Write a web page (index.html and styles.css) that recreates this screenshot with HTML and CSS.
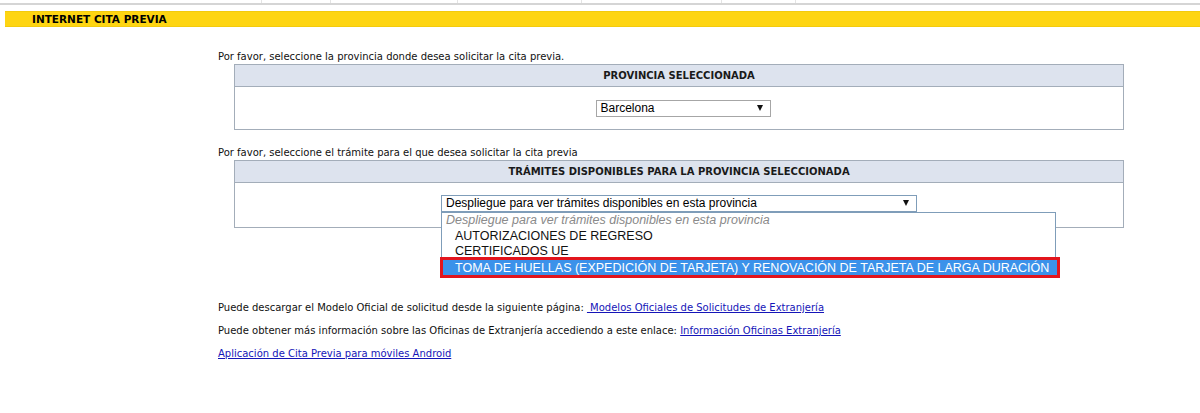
FILE: index.html
```html
<!DOCTYPE html>
<html>
<head>
  <meta charset="utf-8">
  <link rel="stylesheet" href="styles.css">
</head>
<body>
  <div class="top-strip">
    <span style="width: 262px"></span>
    <span style="width: 69px"></span>
    <span style="width: 127px"></span>
    <span style="width: 124px"></span>
    <span style="width: 140px"></span>
    <span style="width: 74px"></span>
  </div>

  <div class="title-bar">INTERNET CITA PREVIA</div>

  <div class="main">
    <p class="intro">Por favor, seleccione la provincia donde desea solicitar la cita previa.</p>
    <div class="panel">
      <div class="panel-head">PROVINCIA SELECCIONADA</div>
      <div class="panel-body">
        <div class="select select-prov">
          <span>Barcelona</span>
          <span class="arrow"></span>
        </div>
      </div>
    </div>

    <p class="intro intro-tramite">Por favor, seleccione el trámite para el que desea solicitar la cita previa</p>
    <div class="panel">
      <div class="panel-head">TRÁMITES DISPONIBLES PARA LA PROVINCIA SELECCIONADA</div>
      <div class="panel-body panel-body-tall">
        <div class="select select-tramite">
          <span>Despliegue para ver trámites disponibles en esta provincia</span>
          <span class="arrow"></span>
          <ul class="dropdown">
            <li class="placeholder">Despliegue para ver trámites disponibles en esta provincia</li>
            <li class="opt-tall">AUTORIZACIONES DE REGRESO</li>
            <li>CERTIFICADOS UE</li>
            <li class="selected">TOMA DE HUELLAS (EXPEDICIÓN DE TARJETA) Y RENOVACIÓN DE TARJETA DE LARGA DURACIÓN</li>
          </ul>
        </div>
      </div>
    </div>

    <div class="links">
      <p>Puede descargar el Modelo Oficial de solicitud desde la siguiente página: <a href="#">&nbsp;Modelos Oficiales de Solicitudes de Extranjería</a></p>
      <p>Puede obtener más información sobre las Oficinas de Extranjería accediendo a este enlace: <a href="#">Información Oficinas Extranjería</a></p>
      <p><a href="#">Aplicación de Cita Previa para móviles Android</a></p>
    </div>
  </div>
</body>
</html>
```

FILE: styles.css
```css
body {
  margin: 0;
  padding: 0;
  font-family: "DejaVu Sans", Verdana, sans-serif;
  font-size: 10px;
  color: #111;
  background: #fff;
}

.top-strip {
  display: flex;
  height: 3px;
  border-bottom: 2px solid #d5d5d5;
}

.top-strip span {
  border-right: 1px solid #e4e4e4;
  box-sizing: border-box;
}

.title-bar {
  margin: 6px 0 0 5px;
  height: 14px;
  line-height: 14px;
  padding-left: 27px;
  background: #fed512;
  border-top: 1px solid #f3cb0c;
  border-bottom: 1px solid #f3cb0c;
  font-weight: bold;
  font-size: 10.5px;
  color: #000;
}

.main {
  margin-left: 218px;
  width: 906px;
}

.intro {
  margin: 24px 0 1px 0;
  line-height: 12px;
}

.intro-tramite {
  margin-top: 17px;
}

.panel {
  margin-left: 16px;
  border: 1px solid #a3adb9;
}

.panel-head {
  height: 21px;
  line-height: 21px;
  background: #dde3ee;
  border-bottom: 1px solid #a3adb9;
  text-align: center;
  font-weight: bold;
  color: #1a1a1a;
}

.panel-body {
  height: 42px;
  display: flex;
  align-items: center;
  justify-content: center;
}

.panel-body-tall {
  height: 40px;
  padding-bottom: 4px;
}

.select {
  position: relative;
  height: 15px;
  border: 1px solid #a6a6a6;
  background: #fff;
  display: flex;
  align-items: center;
  justify-content: space-between;
  padding: 0 7px 0 4px;
  font-family: "Liberation Sans", Arial, sans-serif;
  font-size: 12px;
  color: #000;
}

.select-prov {
  width: 162px;
  margin-left: 8px;
}

.select-tramite {
  width: 463px;
  border-color: #7f9db9;
}

.arrow {
  width: 0;
  height: 0;
  border-left: 3px solid transparent;
  border-right: 3px solid transparent;
  border-top: 6px solid #111;
}

.dropdown {
  position: absolute;
  top: calc(100% + 1px);
  left: -1px;
  width: 613px;
  height: 64px;
  margin: 0;
  padding: 0;
  list-style: none;
  background: #fff;
  border: 1px solid #7f9db9;
  font-size: 12.5px;
}

.dropdown li {
  height: 15px;
  line-height: 15px;
  padding-left: 13px;
  white-space: nowrap;
  color: #111;
}

.dropdown li.placeholder {
  padding-left: 4px;
  font-style: italic;
  color: #8a8a8a;
}

.dropdown li.opt-tall {
  height: 16px;
  line-height: 16px;
}

.dropdown li.selected {
  margin: 1px 0 0 1px;
  height: 15px;
  line-height: 17px;
  padding-left: 12px;
  width: 602px;
  background: #3b92ea;
  color: #fff;
  outline: 3px solid #e2151d;
}

.links {
  margin-top: 68px;
}

.links p {
  margin: 0;
  line-height: 23px;
}

.links a {
  color: #1515b8;
  text-decoration: underline;
}
```
